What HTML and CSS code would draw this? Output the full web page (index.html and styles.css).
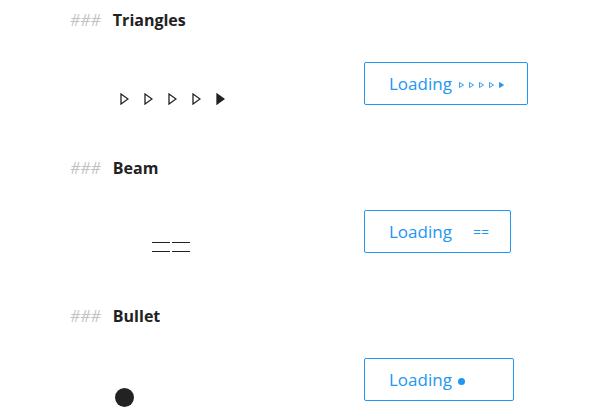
FILE: index.html
```html
<!DOCTYPE html>
<html>
<head>
<meta charset="utf-8">
<link rel="stylesheet" href="styles.css">
</head>
<body>
<section class="demo">
  <h3 class="title"><span class="hash">###</span>Triangles</h3>
  <div class="row">
    <div class="stage stage-tri">
      <svg class="tri" viewBox="0 0 9 12"><polygon points="1,1 8,6 1,11" /></svg>
      <svg class="tri" viewBox="0 0 9 12"><polygon points="1,1 8,6 1,11" /></svg>
      <svg class="tri" viewBox="0 0 9 12"><polygon points="1,1 8,6 1,11" /></svg>
      <svg class="tri" viewBox="0 0 9 12"><polygon points="1,1 8,6 1,11" /></svg>
      <svg class="tri tri-on" viewBox="0 0 9 12"><polygon points="1,1 8,6 1,11" /></svg>
    </div>
    <button class="btn btn-tri">Loading
      <span class="mini-tris">
        <svg class="mtri" viewBox="0 0 5 6"><polygon points="0.5,0.5 4.5,3 0.5,5.5" /></svg>
        <svg class="mtri" viewBox="0 0 5 6"><polygon points="0.5,0.5 4.5,3 0.5,5.5" /></svg>
        <svg class="mtri" viewBox="0 0 5 6"><polygon points="0.5,0.5 4.5,3 0.5,5.5" /></svg>
        <svg class="mtri" viewBox="0 0 5 6"><polygon points="0.5,0.5 4.5,3 0.5,5.5" /></svg>
        <svg class="mtri mtri-on" viewBox="0 0 5 6"><polygon points="0.5,0.5 4.5,3 0.5,5.5" /></svg>
      </span>
    </button>
  </div>
</section>
<section class="demo">
  <h3 class="title"><span class="hash">###</span>Beam</h3>
  <div class="row">
    <div class="stage stage-beam">
      <span class="eq"></span><span class="eq"></span>
    </div>
    <button class="btn btn-beam">Loading <span class="mini-beam">==</span></button>
  </div>
</section>
<section class="demo">
  <h3 class="title"><span class="hash">###</span>Bullet</h3>
  <div class="row">
    <div class="stage stage-bullet">
      <span class="dot"></span>
    </div>
    <button class="btn btn-bullet">Loading <span class="mini-dot"></span></button>
  </div>
</section>
</body>
</html>
```
FILE: styles.css
```css
* { box-sizing: border-box; }
body {
  margin: 0;
  background: #fff;
  font-family: "Open Sans", "Noto Sans", sans-serif;
  color: #222;
}
.demo {
  height: 148px;
  padding: 10px 0 0 70px;
}
.demo:last-child { height: auto; }
.title {
  margin: 0;
  display: flex;
  gap: 12px;
  font-size: 16px;
  line-height: 20px;
  font-weight: 700;
  color: #222;
}
.hash {
  color: #c2c2c2;
  font-weight: 400;
  font-style: italic;
}
.row {
  display: grid;
  grid-template-columns: 294px auto;
  align-items: start;
  margin-top: 32px;
}
.stage { display: flex; }
.stage-tri {
  padding: 31px 0 0 50px;
  gap: 15px;
}
.tri {
  width: 9px;
  height: 12px;
  fill: none;
  stroke: #222;
  stroke-width: 1.3;
}
.tri-on { fill: #222; }
.stage-beam {
  padding: 32px 0 0 82px;
  gap: 2px;
}
.eq {
  width: 18px;
  height: 10px;
  border-top: 1.5px solid #222;
  border-bottom: 1.5px solid #222;
}
.stage-bullet {
  padding: 30px 0 0 45px;
}
.dot {
  width: 19px;
  height: 19px;
  border-radius: 50%;
  background: #222;
}
.btn {
  justify-self: start;
  display: flex;
  align-items: center;
  height: 43px;
  padding: 0 0 0 24px;
  border: 1px solid #2196f3;
  border-radius: 2px;
  background: #fff;
  color: #2196f3;
  font-family: "Open Sans", "Noto Sans", sans-serif;
  font-size: 17px;
  white-space: nowrap;
}
.btn-tri { width: 164px; }
.btn-beam { width: 147px; }
.btn-bullet { width: 150px; }
.mini-tris {
  display: flex;
  gap: 5px;
  margin: 3px 0 0 7px;
}
.mtri {
  width: 5px;
  height: 6px;
  fill: none;
  stroke: #2196f3;
  stroke-width: 0.9;
}
.mtri-on { fill: #2196f3; }
.mini-beam {
  font-size: 14px;
  margin-left: 21px;
}
.mini-dot {
  width: 7px;
  height: 7px;
  border-radius: 50%;
  background: #2196f3;
  margin: 4px 0 0 6px;
}
```
